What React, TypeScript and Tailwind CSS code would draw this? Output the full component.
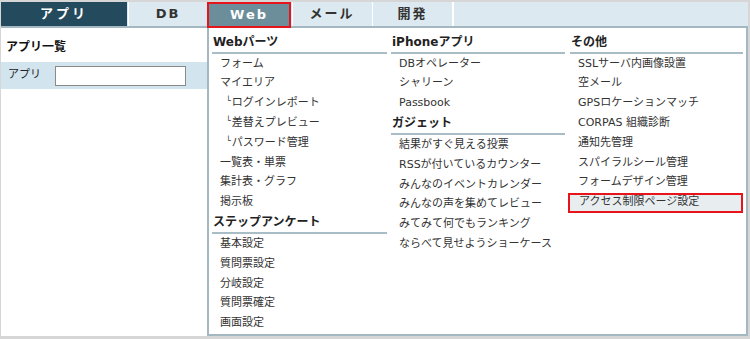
import React from "react";

const font = { fontFamily: '"DejaVu Sans", "Noto Sans CJK JP", sans-serif' };

type Item = { t: string; sub?: boolean; hl?: boolean };

function Header({ t }: { t: string }) {
  return (
    <div className="h-[20px] flex items-center pl-[1px] text-[12px] font-bold text-[#222] border-b-2 border-[#a9bdc6] box-content">
      {t}
    </div>
  );
}

function Row({ it }: { it: Item }) {
  if (it.hl) {
    return (
      <div className="h-[20px] -ml-[2px] flex items-center pl-[9px] text-[11px] text-[#333] bg-[#e8eef0] border-2 border-[#e8141c]">
        {it.t}
      </div>
    );
  }
  return (
    <div className="h-[19.8px] flex items-center pl-[8px] text-[11px] text-[#333]">
      {it.sub && <span className="text-[8px] mr-[1px] ml-[6px] -mt-[4px]">└</span>}
      {it.t}
    </div>
  );
}

function Group({ title, items }: { title: string; items: Item[] }) {
  return (
    <div className="flex flex-col">
      <Header t={title} />
      {items.map((it, i) => (
        <Row key={i} it={it} />
      ))}
    </div>
  );
}

export default function App() {
  const tabs = [
    { t: "DB", w: "w-[79px]" },
    { t: "Web", w: "w-[84px]", active: true },
    { t: "メール", w: "w-[79px]" },
    { t: "開発", w: "w-[80px]" },
  ];
  return (
    <div className="w-[750px] h-[339px] bg-[#d6d6d6] pt-[2px] pl-[1px] pr-[2px] pb-[3px]" style={font}>
      <div className="w-full h-full bg-white flex flex-col">
        <div className="h-[26px] flex bg-[#dce9f0] border-b-2 border-[#a3b8c1] box-border">
          <div className="w-[126px] h-full bg-[#244b5d] text-white text-[13px] font-bold tracking-[3px] flex items-center justify-center">
            アプリ
          </div>
          {tabs.map((tb, i) => (
            <div
              key={i}
              className={
                tb.active
                  ? "w-[84px] h-[26px] -mb-[2px] bg-[#6b8e9a] border-2 border-[#e8141c] text-white text-[13px] font-bold tracking-[2px] flex items-center justify-center"
                  : `${tb.w} h-full ml-[1px] bg-[#dce9f0] text-[#333] text-[13px] font-bold tracking-[2px] flex items-center justify-center border-l border-white`
              }
            >
              {tb.t}
            </div>
          ))}
          <div className="flex-1 h-full border-l-2 border-white" />
        </div>
        <div className="flex flex-1 min-h-0">
          <div className="w-[206px] flex flex-col">
            <div className="h-[34px] flex items-center pl-[5px] pt-[4px] text-[12px] font-bold text-[#111]">アプリ一覧</div>
            <div className="h-[27px] bg-[#d2e4ee] flex items-center pl-[7px]">
              <span className="text-[11px] text-[#222] w-[47px]">アプリ</span>
              <div className="w-[131px] h-[20px] bg-white border border-[#8a8a8a]" />
            </div>
          </div>
          <div className="flex-1 border-l-2 border-r-2 border-b-2 border-[#a3b8c1] pl-[3px] pt-[4px] flex gap-[4px]">
            <div className="w-[175px]">
              <Group
                title="Webパーツ"
                items={[
                  { t: "フォーム" },
                  { t: "マイエリア" },
                  { t: "ログインレポート", sub: true },
                  { t: "差替えプレビュー", sub: true },
                  { t: "パスワード管理", sub: true },
                  { t: "一覧表・単票" },
                  { t: "集計表・グラフ" },
                  { t: "掲示板" },
                ]}
              />
              <Group
                title="ステップアンケート"
                items={[
                  { t: "基本設定" },
                  { t: "質問票設定" },
                  { t: "分岐設定" },
                  { t: "質問票確定" },
                  { t: "画面設定" },
                ]}
              />
            </div>
            <div className="w-[174px]">
              <Group
                title="iPhoneアプリ"
                items={[{ t: "DBオペレーター" }, { t: "シャリーン" }, { t: "Passbook" }]}
              />
              <Group
                title="ガジェット"
                items={[
                  { t: "結果がすぐ見える投票" },
                  { t: "RSSが付いているカウンター" },
                  { t: "みんなのイベントカレンダー" },
                  { t: "みんなの声を集めてレビュー" },
                  { t: "みてみて何でもランキング" },
                  { t: "ならべて見せようショーケース" },
                ]}
              />
            </div>
            <div className="w-[173px] ml-[1px]">
              <Group
                title="その他"
                items={[
                  { t: "SSLサーバ内画像設置" },
                  { t: "空メール" },
                  { t: "GPSロケーションマッチ" },
                  { t: "CORPAS 組織診断" },
                  { t: "通知先管理" },
                  { t: "スパイラルシール管理" },
                  { t: "フォームデザイン管理" },
                  { t: "アクセス制限ページ設定", hl: true },
                ]}
              />
            </div>
          </div>
        </div>
      </div>
    </div>
  );
}
